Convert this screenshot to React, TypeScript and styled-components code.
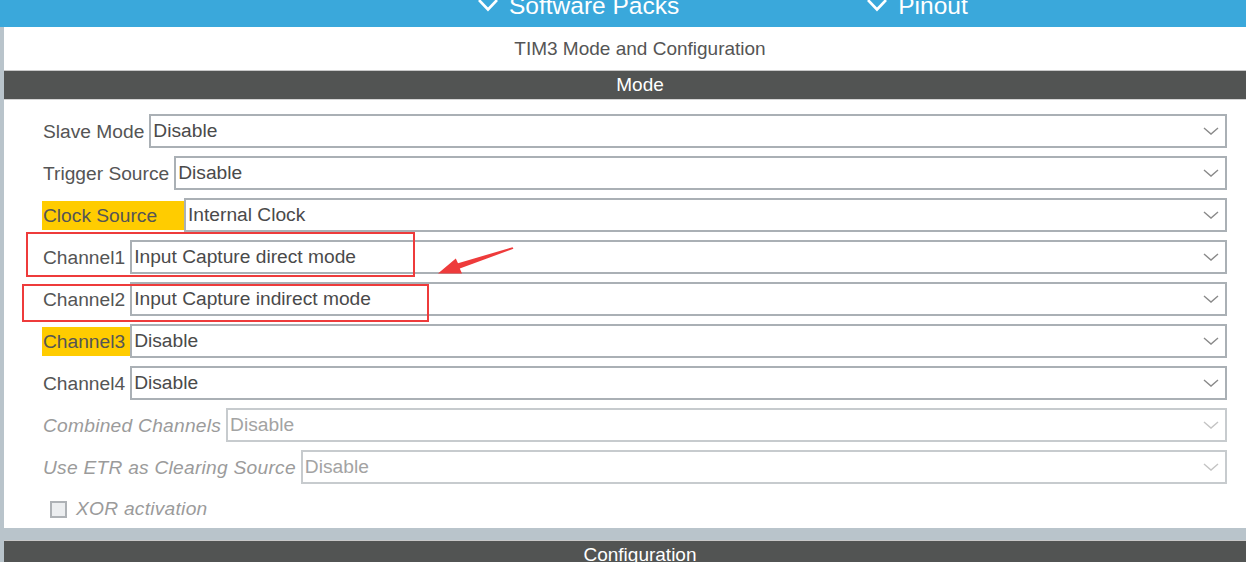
import React from "react";
import styled, { createGlobalStyle } from "styled-components";

const GlobalStyle = createGlobalStyle`
  html, body {
    margin: 0;
    padding: 0;
    width: 1246px;
    height: 562px;
    overflow: hidden;
    background: #ffffff;
    font-family: "Liberation Sans", Arial, Helvetica, sans-serif;
  }
  * { box-sizing: border-box; }
`;

const Screen = styled.div`
  position: relative;
  width: 1246px;
  height: 562px;
  overflow: hidden;
  display: flex;
  flex-direction: column;
`;

const TopBar = styled.div`
  height: 27px;
  flex: none;
  background: #3aa8db;
  overflow: hidden;
  display: flex;
  align-items: flex-start;
  padding-left: 478px;
  gap: 188px;
`;

const NavItem = styled.div`
  display: flex;
  align-items: flex-start;
  gap: 11px;
  margin-top: -6px;
  color: #ffffff;
  font-size: 24.5px;
  line-height: 24px;
  white-space: nowrap;
`;

const NavChevron = styled.svg`
  width: 20px;
  height: 20px;
  margin-top: 3px;
  flex: none;
`;

const Workspace = styled.div`
  flex: 1;
  background: #b9c4cb;
  padding-left: 4px;
  display: flex;
  flex-direction: column;
  gap: 12px;
  min-height: 0;
`;

const Panel = styled.div`
  background: #ffffff;
  display: flex;
  flex-direction: column;
  flex: none;
`;

const PanelTitle = styled.div`
  height: 43px;
  line-height: 43px;
  text-align: center;
  padding-left: 30px;
  font-size: 19px;
  color: #555555;
`;

const SectionHeader = styled.div`
  flex: none;
  height: 30px;
  line-height: 28px;
  border-top: 1px solid #c8c8c8;
  border-bottom: 1px solid #d4d4d4;
  background: #525453;
  color: #ffffff;
  text-align: center;
  padding-left: 30px;
  font-size: 19px;
`;

const Form = styled.div`
  display: flex;
  flex-direction: column;
  gap: 8px;
  padding: 14px 19px 2px 38px;
`;

const Row = styled.div`
  display: flex;
  align-items: center;
  height: 34px;
`;

const Label = styled.span<{ $highlight?: boolean; $disabled?: boolean; $minWidth?: number }>`
  height: 29px;
  line-height: 29px;
  padding: 0 5px 0 1px;
  font-size: 19.2px;
  letter-spacing: ${(p) => (p.$disabled ? "0.25px" : "0")};
  white-space: nowrap;
  flex: none;
  min-width: ${(p) => (p.$minWidth ? `${p.$minWidth}px` : "auto")};
  color: ${(p) => (p.$disabled ? "#9b9b9b" : "#555555")};
  font-style: ${(p) => (p.$disabled ? "italic" : "normal")};
  background: ${(p) => (p.$highlight ? "#ffcc00" : "transparent")};
`;

const Select = styled.div<{ $disabled?: boolean }>`
  flex: 1;
  height: 34px;
  display: flex;
  align-items: center;
  justify-content: space-between;
  padding: 0 6px 0 2px;
  border: 2px solid ${(p) => (p.$disabled ? "#c7cbce" : "#aab0b5")};
  background: #ffffff;
  font-size: 19.2px;
  color: ${(p) => (p.$disabled ? "#a3a3a3" : "#4a4a4a")};
  white-space: nowrap;
`;

const SelectChevron = styled.svg<{ $disabled?: boolean }>`
  width: 16px;
  height: 8px;
  flex: none;
  stroke: ${(p) => (p.$disabled ? "#c4c4c4" : "#8a8a8a")};
`;

const CheckRow = styled.div`
  display: flex;
  align-items: center;
  height: 34px;
  padding-left: 8px;
  gap: 9px;
`;

const CheckBox = styled.span`
  width: 17px;
  height: 17px;
  border: 2px solid #aeb2b6;
  background: #eceef0;
  flex: none;
`;

const CheckLabel = styled.span`
  font-size: 19.2px;
  letter-spacing: 0.25px;
  font-style: italic;
  color: #9b9b9b;
`;

const MarkBox = styled.div<{ $x: number; $y: number; $w: number; $h: number }>`
  position: absolute;
  left: ${(p) => p.$x}px;
  top: ${(p) => p.$y}px;
  width: ${(p) => p.$w}px;
  height: ${(p) => p.$h}px;
  border: 2px solid #ee3b3b;
  pointer-events: none;
`;

const ArrowLayer = styled.svg`
  position: absolute;
  left: 0;
  top: 0;
  width: 1246px;
  height: 562px;
  pointer-events: none;
`;

type Field = {
  label: string;
  value: string;
  highlight?: boolean;
  disabled?: boolean;
  minWidth?: number;
};

const fields: Field[] = [
  { label: "Slave Mode", value: "Disable" },
  { label: "Trigger Source", value: "Disable" },
  { label: "Clock Source", value: "Internal Clock", highlight: true, minWidth: 142 },
  { label: "Channel1", value: "Input Capture direct mode" },
  { label: "Channel2", value: "Input Capture indirect mode" },
  { label: "Channel3", value: "Disable", highlight: true },
  { label: "Channel4", value: "Disable" },
  { label: "Combined Channels", value: "Disable", disabled: true },
  { label: "Use ETR as Clearing Source", value: "Disable", disabled: true },
];

const Chevron = ({ disabled }: { disabled?: boolean }) => (
  <SelectChevron $disabled={disabled} viewBox="0 0 16 8" fill="none" strokeWidth={1.4}>
    <polyline points="1,1 8,7 15,1" />
  </SelectChevron>
);

const NavArrow = () => (
  <NavChevron viewBox="0 0 20 20" fill="none" stroke="#ffffff" strokeWidth={2.6}>
    <polyline points="1,3 10,12.5 19,3" />
  </NavChevron>
);

export default function App() {
  return (
    <>
      <GlobalStyle />
      <Screen>
        <TopBar>
          <NavItem>
            <NavArrow />
            <span>Software Packs</span>
          </NavItem>
          <NavItem>
            <NavArrow />
            <span>Pinout</span>
          </NavItem>
        </TopBar>
        <Workspace>
          <Panel>
            <PanelTitle>TIM3 Mode and Configuration</PanelTitle>
            <SectionHeader>Mode</SectionHeader>
            <Form>
              {fields.map((f) => (
                <Row key={f.label}>
                  <Label $highlight={f.highlight} $disabled={f.disabled} $minWidth={f.minWidth}>
                    {f.label}
                  </Label>
                  <Select $disabled={f.disabled}>
                    <span>{f.value}</span>
                    <Chevron disabled={f.disabled} />
                  </Select>
                </Row>
              ))}
              <CheckRow>
                <CheckBox />
                <CheckLabel>XOR activation</CheckLabel>
              </CheckRow>
            </Form>
          </Panel>
          <SectionHeader>Configuration</SectionHeader>
        </Workspace>
        <MarkBox $x={26} $y={232} $w={389} $h={45} />
        <MarkBox $x={22} $y={284} $w={407} $h={38} />
        <ArrowLayer viewBox="0 0 1246 562">
          <polygon
            fill="#ee3b3b"
            points="512.6,247.2 458,263.2 455.8,258.6 438,273.5 462,273.4 459.8,268.4 513.4,248.8"
          />
        </ArrowLayer>
      </Screen>
    </>
  );
}
